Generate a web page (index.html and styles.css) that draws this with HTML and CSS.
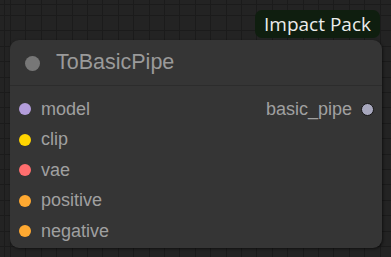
FILE: index.html
```html
<!DOCTYPE html>
<html>
<head>
<meta charset="utf-8">
<link rel="stylesheet" href="styles.css">
</head>
<body>
<div class="canvas">
  <div class="stack">
    <div class="badge">Impact Pack</div>
    <div class="node">
      <div class="title">
        <span class="title-dot"></span>
        <span class="title-text">ToBasicPipe</span>
      </div>
      <div class="slots">
        <div class="row">
          <div class="slot"><span class="dot model"></span><span class="label">model</span></div>
          <div class="slot out"><span class="label">basic_pipe</span><span class="dot pipe"></span></div>
        </div>
        <div class="row"><div class="slot"><span class="dot clip"></span><span class="label">clip</span></div></div>
        <div class="row"><div class="slot"><span class="dot vae"></span><span class="label">vae</span></div></div>
        <div class="row"><div class="slot"><span class="dot cond"></span><span class="label">positive</span></div></div>
        <div class="row"><div class="slot"><span class="dot cond"></span><span class="label">negative</span></div></div>
      </div>
    </div>
  </div>
</div>
</body>
</html>
```
FILE: styles.css
```css
html, body {
  margin: 0;
  padding: 0;
}
body {
  width: 391px;
  height: 257px;
  overflow: hidden;
  font-family: "Liberation Sans", Arial, sans-serif;
  background-color: #232323;
  background-image:
    repeating-linear-gradient(to right, #1b1b1b 0, #1b1b1b 1px, transparent 1px, transparent 15.4px),
    repeating-linear-gradient(to bottom, #1b1b1b 0, #1b1b1b 1px, transparent 1px, transparent 15.4px);
  background-position: 10px 0, 0 15px;
}
.canvas {
  padding: 10px 0 0 10px;
}
.stack {
  width: 372px;
  display: flex;
  flex-direction: column;
}
.badge {
  align-self: flex-end;
  margin-right: 2px;
  margin-bottom: 2px;
  height: 28px;
  line-height: 28px;
  padding: 0 9px 0 9px;
  background: #0f1e0f;
  color: #ececec;
  font-family: "Open Sans", "Liberation Sans", sans-serif;
  font-size: 19px;
  border-radius: 7px;
}
.node {
  height: 208px;
  background: #353535;
  border-radius: 9px;
  box-shadow: 1px 1px 3px rgba(0, 0, 0, 0.55);
  display: flex;
  flex-direction: column;
}
.title {
  height: 46px;
  box-sizing: border-box;
  border-bottom: 1px solid #2c2c2c;
  display: flex;
  align-items: center;
  padding-left: 15px;
}
.title-dot {
  width: 15px;
  height: 15px;
  border-radius: 50%;
  background: #777777;
  margin-right: 16px;
  margin-top: 1px;
}
.title-text {
  color: #9a9a9a;
  font-size: 21.5px;
}
.slots {
  padding-top: 8px;
  display: flex;
  flex-direction: column;
}
.row {
  height: 30.5px;
  display: flex;
  align-items: center;
  justify-content: space-between;
}
.slot {
  display: flex;
  align-items: center;
  padding-left: 9px;
}
.slot.out {
  padding-left: 0;
  padding-right: 8px;
}
.label {
  color: #a0a0a0;
  font-size: 18px;
}
.dot {
  width: 12px;
  height: 12px;
  border-radius: 50%;
  margin-right: 10px;
}
.out .dot {
  margin-right: 0;
  margin-left: 9px;
}
.model { background: #b39ddb; }
.clip { background: #ffd500; }
.vae { background: #ff6e6e; }
.cond { background: #ffa931; }
.pipe {
  width: 11px;
  height: 11px;
  background: #a7a7bd;
  border: 1.5px solid #141414;
}
```
